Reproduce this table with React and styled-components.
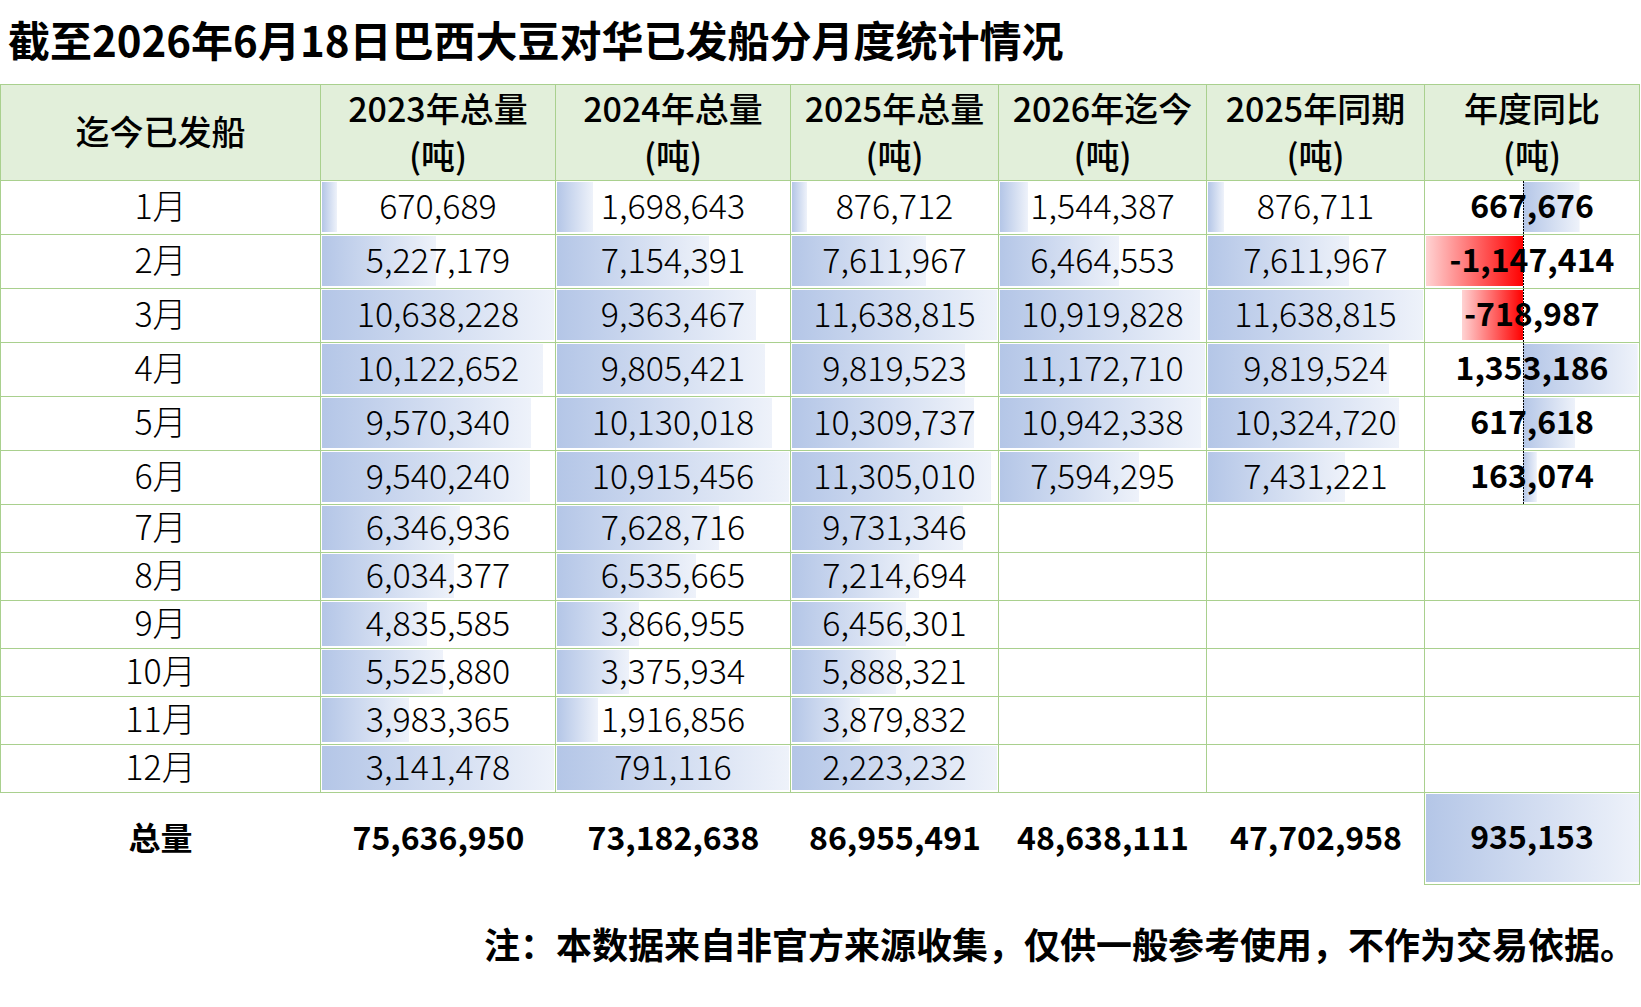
import React from 'react';
import styled, { createGlobalStyle } from 'styled-components';

const GREEN = '#a9d08e';
const BLUE_BAR = 'linear-gradient(to right, #b4c6e7, #eef2fa)';
const RED_BAR = 'linear-gradient(to right, #ffd3d3, #ff0000)';
const AXIS = 'repeating-linear-gradient(to bottom, #000 0 2px, transparent 2px 3px)';

// column box widths, right border included (first one also holds the left border)
const COLS = [321, 235, 235, 208, 208, 218, 215];

const HEADERS = [
  ['迄今已发船'],
  ['2023年总量', '(吨)'],
  ['2024年总量', '(吨)'],
  ['2025年总量', '(吨)'],
  ['2026年迄今', '(吨)'],
  ['2025年同期', '(吨)'],
  ['年度同比', '(吨)'],
];

const SERIES = [
  [670689, 5227179, 10638228, 10122652, 9570340, 9540240, 6346936, 6034377, 4835585, 5525880, 3983365, 3141478],
  [1698643, 7154391, 9363467, 9805421, 10130018, 10915456, 7628716, 6535665, 3866955, 3375934, 1916856, 791116],
  [876712, 7611967, 11638815, 9819523, 10309737, 11305010, 9731346, 7214694, 6456301, 5888321, 3879832, 2223232],
  [1544387, 6464553, 10919828, 11172710, 10942338, 7594295],
  [876711, 7611967, 11638815, 9819524, 10324720, 7431221],
];
const YOY = [667676, -1147414, -718987, 1353186, 617618, 163074];
const TOTALS = [75636950, 73182638, 86955491, 48638111, 47702958];
const YOY_TOTAL = 935153;

const fmt = (n) => n.toLocaleString('en-US');

const GlobalStyle = createGlobalStyle`
  html, body {
    margin: 0;
    padding: 0;
    background: #fff;
  }
  body {
    font-family: "Noto Sans CJK SC", "Noto Sans", sans-serif;
    color: #000;
  }
`;

const Page = styled.div`
  width: 1641px;
`;

const Title = styled.h1`
  margin: 0;
  height: 84px;
  padding-left: 8px;
  box-sizing: border-box;
  font-size: 42px;
  font-weight: 700;
  line-height: 78px;
  white-space: nowrap;
`;

const Grid = styled.div`
  display: grid;
  grid-template-columns: ${COLS.map((c) => `${c}px`).join(' ')};
`;

const HeadCell = styled.div`
  height: 97px;
  box-sizing: border-box;
  background: #e2efda;
  border-top: 1px solid ${GREEN};
  border-bottom: 1px solid ${GREEN};
  border-right: 1px solid ${GREEN};
  border-left: ${(p) => (p.$first ? `1px solid ${GREEN}` : 'none')};
  padding-bottom: 4px;
  display: flex;
  flex-direction: column;
  align-items: center;
  justify-content: center;
  font-size: 34px;
  font-weight: 500;
  line-height: 47px;
  white-space: nowrap;
`;

const Cell = styled.div`
  height: ${(p) => p.$h}px;
  box-sizing: border-box;
  border-right: 1px solid ${GREEN};
  border-bottom: 1px solid ${GREEN};
  border-left: ${(p) => (p.$first ? `1px solid ${GREEN}` : 'none')};
  padding-bottom: 7px;
  display: flex;
  align-items: center;
  justify-content: center;
  font-size: ${(p) => (p.$bold ? 32 : 34)}px;
  font-weight: ${(p) => (p.$bold ? 700 : 300)};
  background-repeat: no-repeat;
  white-space: nowrap;
`;

const TotalCell = styled.div`
  height: 92px;
  box-sizing: border-box;
  padding-bottom: 7px;
  display: flex;
  align-items: center;
  justify-content: center;
  font-size: 32px;
  font-weight: 700;
  white-space: nowrap;
  background-repeat: no-repeat;
  ${(p) =>
    p.$boxed &&
    `
    margin-left: -1px;
    border: 1px solid ${GREEN};
    border-top: none;
  `}
`;

const Note = styled.p`
  margin: 34px 0 0;
  width: 1636px;
  text-align: right;
  font-size: 36px;
  font-weight: 700;
  line-height: 48px;
  white-space: nowrap;
`;

// plain data bar inside a cell of box width w
const barStyle = (w, frac, h) => {
  const len = Math.max(0, Math.round((w - 3) * frac));
  return {
    backgroundImage: BLUE_BAR,
    backgroundSize: `${len}px ${h - 4}px`,
    backgroundPosition: '1px 1px',
  };
};

const NEG_MAX = Math.max(...YOY.map((v) => (v < 0 ? -v : 0)));
const POS_MAX = Math.max(...YOY.map((v) => (v > 0 ? v : 0)));

// diverging bar around a dotted axis
const yoyStyle = (w, v, h) => {
  const span = w - 3;
  const axis = 1 + (span * NEG_MAX) / (NEG_MAX + POS_MAX);
  const len = (span * Math.abs(v)) / (NEG_MAX + POS_MAX);
  const x = v < 0 ? axis - len : axis;
  return {
    backgroundImage: `${AXIS}, ${v < 0 ? RED_BAR : BLUE_BAR}`,
    backgroundSize: `1px 100%, ${len}px ${h - 4}px`,
    backgroundPosition: `${Math.round(axis)}px 0, ${x}px 1px`,
  };
};

function Header() {
  return HEADERS.map((lines, i) => (
    <HeadCell key={i} $first={i === 0}>
      {lines.map((l) => (
        <span key={l}>{l}</span>
      ))}
    </HeadCell>
  ));
}

function MonthRow({ idx }) {
  const h = idx < 6 ? 54 : 48;
  const cells = [
    <Cell key="m" $first $h={h}>
      {idx + 1}月
    </Cell>,
  ];
  SERIES.forEach((series, c) => {
    const v = series[idx];
    const w = COLS[c + 1];
    if (v === undefined) {
      cells.push(<Cell key={c} $h={h} />);
      return;
    }
    const scope = c < 3 ? series.slice(0, 11) : series;
    const frac = idx === 11 ? 1 : v / Math.max(...scope);
    cells.push(
      <Cell key={c} $h={h} style={barStyle(w, frac, h)}>
        {fmt(v)}
      </Cell>
    );
  });
  const y = YOY[idx];
  cells.push(
    y === undefined ? (
      <Cell key="y" $h={h} />
    ) : (
      <Cell key="y" $h={h} $bold style={yoyStyle(COLS[6], y, h)}>
        {fmt(y)}
      </Cell>
    )
  );
  return cells;
}

function TotalRow() {
  return [
    <TotalCell key="t">总量</TotalCell>,
    ...TOTALS.map((t, i) => <TotalCell key={i}>{fmt(t)}</TotalCell>),
    <TotalCell key="y" $boxed style={barStyle(COLS[6] + 1, 1, 92)}>
      {fmt(YOY_TOTAL)}
    </TotalCell>,
  ];
}

export default function App() {
  return (
    <Page>
      <GlobalStyle />
      <Title>截至2026年6月18日巴西大豆对华已发船分月度统计情况</Title>
      <Grid>
        <Header />
        {Array.from({ length: 12 }, (_, i) => (
          <MonthRow key={i} idx={i} />
        ))}
        <TotalRow />
      </Grid>
      <Note>注：本数据来自非官方来源收集，仅供一般参考使用，不作为交易依据。</Note>
    </Page>
  );
}
